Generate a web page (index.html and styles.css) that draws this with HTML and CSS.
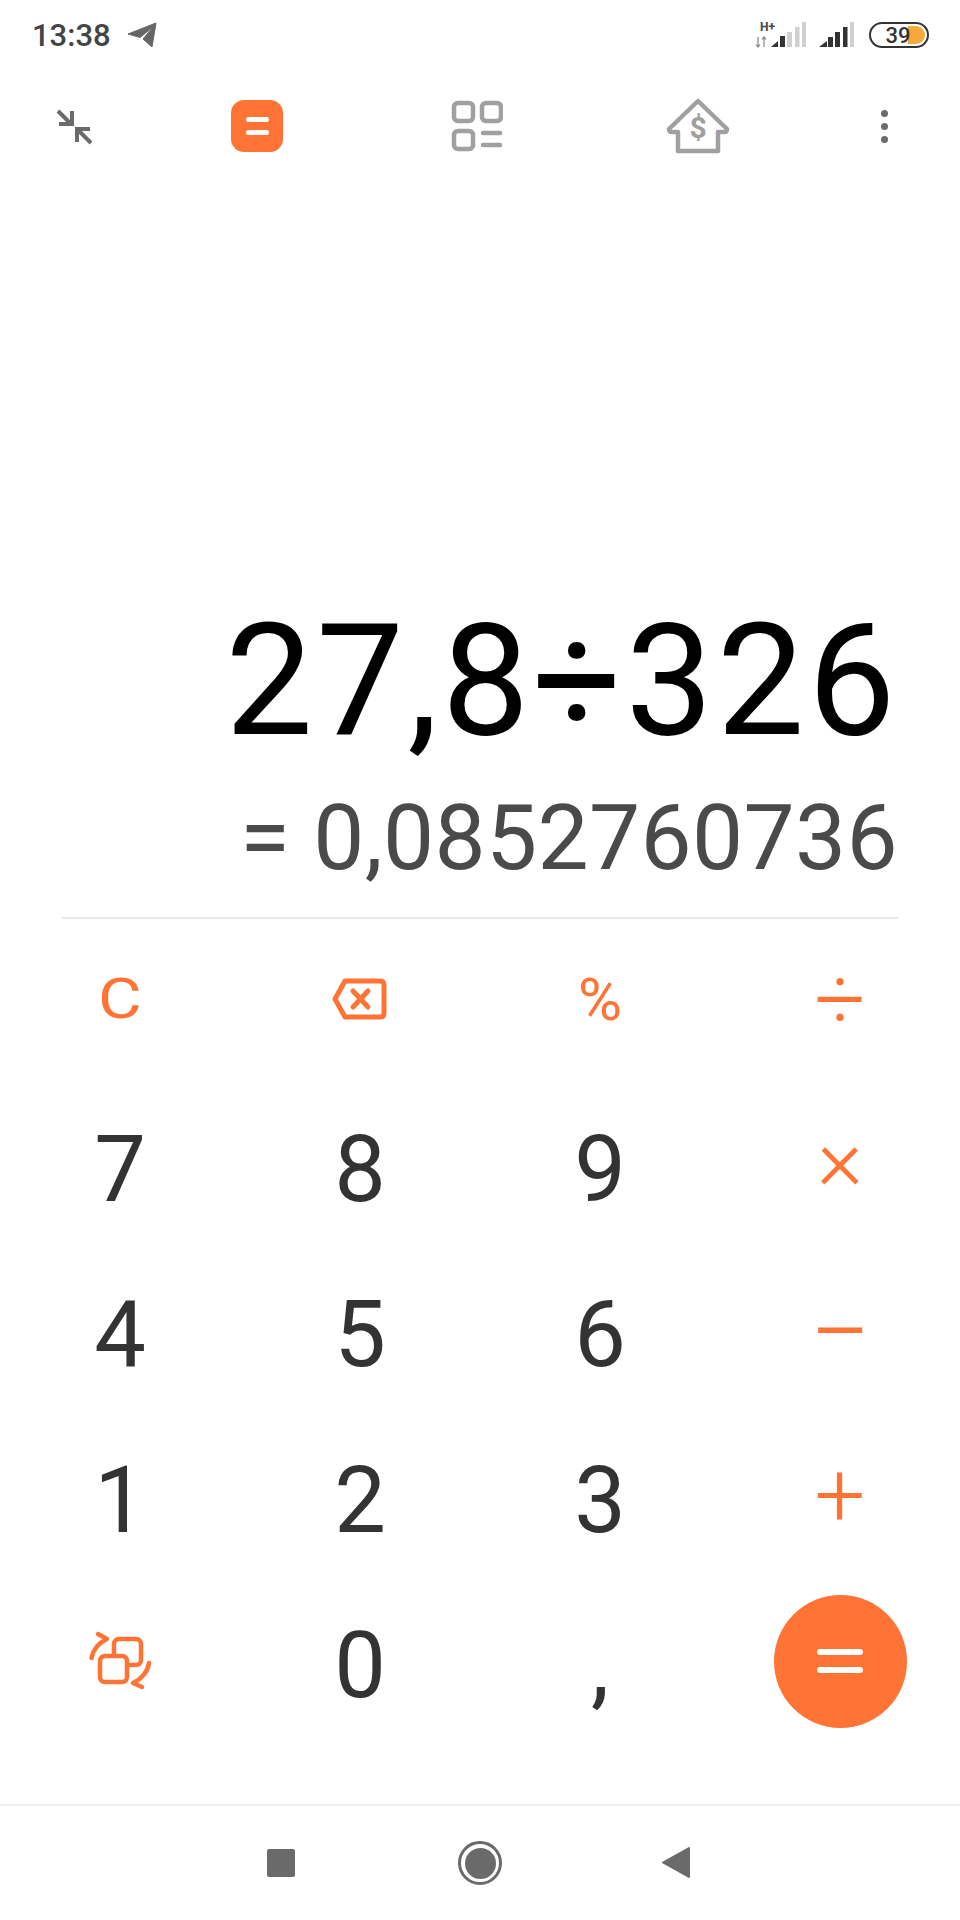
FILE: index.html
```html
<!DOCTYPE html>
<html lang="en">
<head>
    <meta charset="UTF-8">
    <meta name="viewport" content="width=device-width, initial-scale=1.0">
    <title>Calculator</title>
    <link rel="stylesheet" href="styles.css">
</head>
<body>
<div class="app">

    <!-- Status bar -->
    <div class="status-bar">
        <div class="status-left">
            <span class="clock">13:38</span>
            <svg class="telegram" width="30" height="26" viewBox="126 22 30 26">
                <path d="M155 23 L127 34 L139 37.500 L152 27 L142 39 L151 47 Z" fill="#666" stroke="#666" stroke-linejoin="round"/>
            </svg>
        </div>
        <div class="status-right">
            <div class="network">
                <span class="hplus">H+</span>
                <svg width="52" height="28" viewBox="755 20 52 28">
                    <path d="M758 36 V46 M756 43.500 L758 46 L760 43.500 M764 46 V36 M762 38.500 L764 36 L766 38.500" stroke="#888" stroke-width="1.200" fill="none"/>
                    <path d="M771 46 L778 40 V46 Z" fill="#333"/>
                    <rect x="780" y="35" width="5" height="11" fill="#333"/>
                    <rect x="787" y="31" width="5" height="15" fill="#d0d0d0"/>
                    <rect x="795" y="26" width="4.500" height="20" fill="#d0d0d0"/>
                    <rect x="802" y="21" width="4" height="25" fill="#d0d0d0"/>
                </svg>
            </div>
            <svg class="signal" width="36" height="26" viewBox="819 21 36 26">
                <path d="M819 46 L827 40 V46 Z" fill="#333"/>
                <rect x="828" y="36" width="5" height="10" fill="#333"/>
                <rect x="835" y="31" width="5" height="15" fill="#333"/>
                <rect x="843" y="26" width="4.500" height="20" fill="#333"/>
                <rect x="850" y="21" width="4" height="25" fill="#d0d0d0"/>
            </svg>
            <div class="battery">
                <div class="battery-fill"></div>
                <span class="battery-level">39</span>
            </div>
        </div>
    </div>

    <!-- Mode toolbar -->
    <div class="toolbar">
        <svg width="40" height="40" viewBox="54 106 40 40" fill="none" stroke="#6b6b6b" stroke-width="4">
            <path d="M58 111 L71 124 M59 124 H72 V111"/>
            <path d="M91 143 L78 130 M77 142 V129 H90"/>
        </svg>
        <div class="mode-active"><span></span><span></span></div>
        <svg width="52" height="52" viewBox="451 101 52 52" fill="none" stroke="#a0a0a0" stroke-width="4.500">
            <rect x="454" y="104" width="19" height="18" rx="4"/>
            <rect x="482" y="104" width="19" height="18" rx="4"/>
            <rect x="454" y="132" width="19" height="18" rx="4"/>
            <path d="M483 134 H500 M483 146 H500" stroke-linecap="round"/>
        </svg>
        <svg width="64" height="56" viewBox="666 99 64 56" fill="none" stroke="#a0a0a0" stroke-width="4.500" stroke-linejoin="round">
            <path d="M698 102 L669 130 Q669 133 672 133 H678 V152 H718 V133 H724 Q727 133 727 130 Z"/>
            <text x="698" y="139" class="house-dollar">$</text>
        </svg>
        <div class="more-dots"><span></span><span></span><span></span></div>
    </div>

    <!-- Expression and result -->
    <div class="display">
        <div class="expression">27,8÷326</div>
        <div class="result">= 0,0852760736</div>
    </div>

    <!-- Keypad -->
    <div class="keypad">
        <div class="key op-text clear">C</div>
        <div class="key">
            <svg width="60" height="48" viewBox="331 976 60 48" fill="none" stroke="#ff7435" stroke-width="5" stroke-linejoin="round" stroke-linecap="round">
                <path d="M346 982 H381 Q385 982 385 986 V1014 Q385 1018 381 1018 H346 L336 1000 Z"/>
                <path d="M354 992 L369 1008 M369 992 L354 1008"/>
            </svg>
        </div>
        <div class="key op-text percent">%</div>
        <div class="key op">÷</div>

        <div class="key digit">7</div>
        <div class="key digit">8</div>
        <div class="key digit">9</div>
        <div class="key op times">×</div>

        <div class="key digit">4</div>
        <div class="key digit">5</div>
        <div class="key digit">6</div>
        <div class="key op minus">−</div>

        <div class="key digit">1</div>
        <div class="key digit">2</div>
        <div class="key digit">3</div>
        <div class="key op">+</div>

        <div class="key">
            <svg width="64" height="64" viewBox="88 1629 64 64" fill="none" stroke="#ff7435" stroke-width="4.500" stroke-linecap="round" stroke-linejoin="round">
                <rect x="114" y="1639" width="27" height="26" rx="5"/>
                <rect x="100" y="1656" width="27" height="26" rx="5" fill="#ffffff"/>
                <path d="M91.500 1658 Q94 1645 107 1639 L98 1634"/>
                <path d="M149 1663 Q147 1676 133 1683 L142 1687"/>
            </svg>
        </div>
        <div class="key digit">0</div>
        <div class="key digit">,</div>
        <div class="key">
            <div class="equals"><span></span><span></span></div>
        </div>
    </div>

    <!-- Navigation bar -->
    <div class="nav-bar">
        <div class="nav-square"></div>
        <div class="nav-home"><div></div></div>
        <svg class="nav-back" width="28" height="32" viewBox="662 1847 28 32">
            <path d="M663 1862.500 L689 1848 V1877 Z" fill="#6a6a6a" stroke="#6a6a6a" stroke-width="2" stroke-linejoin="round"/>
        </svg>
    </div>

</div>
</body>
</html>
```

FILE: styles.css
```css
body {
    margin: 0;
    background: #ffffff;
    font-family: 'Roboto', sans-serif;
}

.app {
    width: 960px;
    height: 1920px;
    display: flex;
    flex-direction: column;
    overflow: hidden;
}

/* Status bar */
.status-bar {
    height: 70px;
    padding: 0 31px 0 32px;
    display: flex;
    align-items: center;
    justify-content: space-between;
}

.status-left {
    display: flex;
    align-items: center;
    gap: 16px;
}

.clock {
    font-size: 31px;
    font-weight: 500;
    color: #444444;
}

.status-right {
    display: flex;
    align-items: center;
}

.network {
    position: relative;
    display: flex;
}

.hplus {
    position: absolute;
    top: -1px;
    left: 5px;
    font-size: 12px;
    font-weight: 700;
    color: #444444;
}

.signal {
    margin-left: 12px;
}

.battery {
    position: relative;
    width: 60px;
    height: 26px;
    margin-left: 14px;
    box-sizing: border-box;
    border: 2px solid #333333;
    border-radius: 13px;
    display: flex;
    align-items: center;
    justify-content: center;
}

.battery-fill {
    position: absolute;
    top: 2px;
    right: 2px;
    bottom: 2px;
    width: 17px;
    background: #f5a93a;
    border-radius: 0 9px 9px 0;
}

.battery-level {
    position: relative;
    left: -1px;
    font-size: 22px;
    font-weight: 500;
    color: #333333;
}

/* Toolbar */
.toolbar {
    height: 112px;
    display: grid;
    grid-template-columns: 148px 218px 222px 220px 152px;
    justify-items: center;
    align-items: center;
}

.mode-active {
    width: 52px;
    height: 52px;
    border-radius: 13px;
    background: #ff7435;
    display: flex;
    flex-direction: column;
    align-items: center;
    justify-content: center;
    gap: 8px;
}

.mode-active span {
    width: 23px;
    height: 5px;
    border-radius: 3px;
    background: #ffffff;
}

.house-dollar {
    font-family: 'Roboto', sans-serif;
    font-size: 30px;
    font-weight: 700;
    fill: #a0a0a0;
    stroke: none;
    text-anchor: middle;
}

.more-dots {
    display: flex;
    flex-direction: column;
    gap: 6px;
}

.more-dots span {
    width: 7px;
    height: 7px;
    border-radius: 50%;
    background: #6b6b6b;
}

/* Display */
.display {
    flex: 1;
    margin: 0 62px;
    padding-right: 2px;
    border-bottom: 2px solid #e8e8e8;
    display: flex;
    flex-direction: column;
    justify-content: flex-end;
    align-items: flex-end;
}

.expression {
    margin-right: -3px;
    font-size: 156px;
    letter-spacing: 3.500px;
    line-height: 190px;
    color: #000000;
    white-space: nowrap;
}

.result {
    margin-top: 12px;
    margin-bottom: 29px;
    margin-right: -2px;
    font-size: 91px;
    letter-spacing: 0.350px;
    line-height: 100px;
    color: #4a4a4a;
    white-space: nowrap;
}

/* Keypad */
.keypad {
    margin-top: -2px;
    margin-bottom: 60px;
    display: grid;
    grid-template-columns: repeat(4, 240px);
    grid-auto-rows: 165.500px;
}

.key {
    display: flex;
    align-items: center;
    justify-content: center;
}

.digit {
    padding-top: 9px;
    font-size: 92px;
    color: #333333;
}

.op-text {
    font-size: 56px;
    color: #ff7435;
}

.clear {
    transform: scaleX(1.2);
}

.percent {
    font-size: 60px;
}

.op {
    font-size: 90px;
    font-weight: 300;
    color: #ff7435;
}

.times {
    padding-bottom: 12px;
    font-size: 88px;
}

.minus {
    padding-top: 3px;
    font-size: 108px;
}

.equals {
    width: 133px;
    height: 133px;
    border-radius: 50%;
    background: #ff7435;
    display: flex;
    flex-direction: column;
    align-items: center;
    justify-content: center;
    gap: 12px;
}

.equals span {
    width: 46px;
    height: 6px;
    border-radius: 3px;
    background: #ffffff;
}

/* Navigation bar */
.nav-bar {
    height: 116px;
    box-sizing: border-box;
    padding-right: 3px;
    border-top: 2px solid #eeeeee;
    display: flex;
    align-items: center;
    justify-content: center;
    gap: 163px;
}

.nav-square {
    width: 28px;
    height: 28px;
    border-radius: 2px;
    background: #6a6a6a;
}

.nav-home {
    width: 44px;
    height: 44px;
    box-sizing: border-box;
    border: 3px solid #6a6a6a;
    border-radius: 50%;
    display: flex;
    align-items: center;
    justify-content: center;
}

.nav-home div {
    width: 31px;
    height: 31px;
    border-radius: 50%;
    background: #6a6a6a;
}

.nav-back {
    margin-left: -3px;
}
```
